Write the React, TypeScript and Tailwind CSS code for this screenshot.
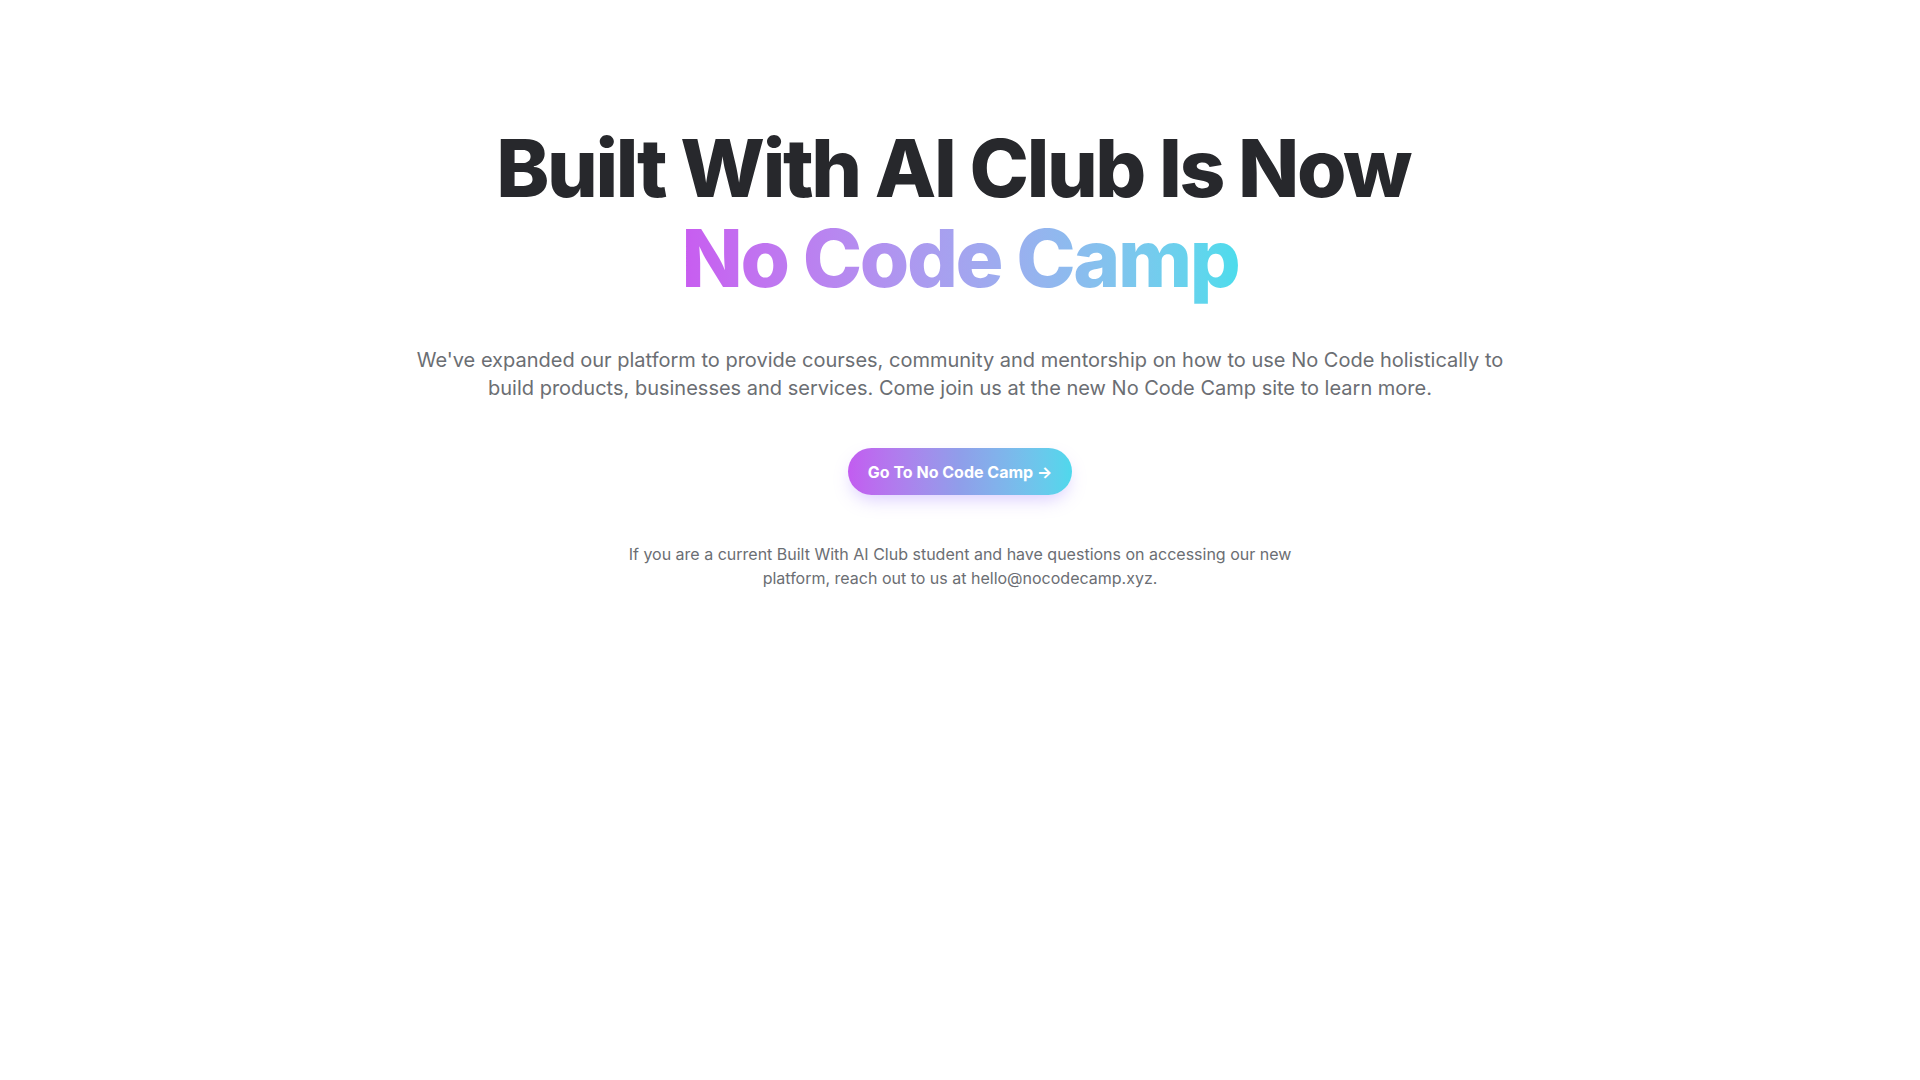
import React from "react";

export default function App() {
  return (
    <div
      className="min-h-screen w-full bg-white flex flex-col items-center pt-[123px]"
      style={{ fontFamily: "Inter, 'Noto Sans', sans-serif" }}
    >
      <h1 className="text-center text-[80px] leading-[90px] font-extrabold tracking-[-0.03em] text-[#27282c]">
        <span className="block pr-[14px]">Built With AI Club Is Now</span>
        <span className="inline-block bg-gradient-to-r from-[#c85cf0] to-[#4cdcec] bg-clip-text text-transparent pb-1 -mb-1">
          No Code Camp
        </span>
      </h1>
      <p className="mt-[43px] max-w-[1100px] text-center text-xl leading-7 text-[#6b6e73]">
        We've expanded our platform to provide courses, community and mentorship on how to use No Code holistically to
        build products, businesses and services. Come join us at the new No Code Camp site to learn more.
      </p>
      <a
        href="#"
        className="mt-[46px] h-[47px] px-5 flex items-center justify-center rounded-full bg-gradient-to-r from-[#c25cf0] via-[#8f9eea] to-[#4fd8ec] text-white text-base font-bold shadow-[0_8px_18px_-4px_rgba(170,140,255,0.45)]"
      >
        Go To No Code Camp →
      </a>
      <p className="mt-[47px] max-w-[680px] text-center text-base leading-6 text-[#6b6e73]">
        If you are a current Built With AI Club student and have questions on accessing our new platform, reach out to
        us at hello@nocodecamp.xyz.
      </p>
    </div>
  );
}
